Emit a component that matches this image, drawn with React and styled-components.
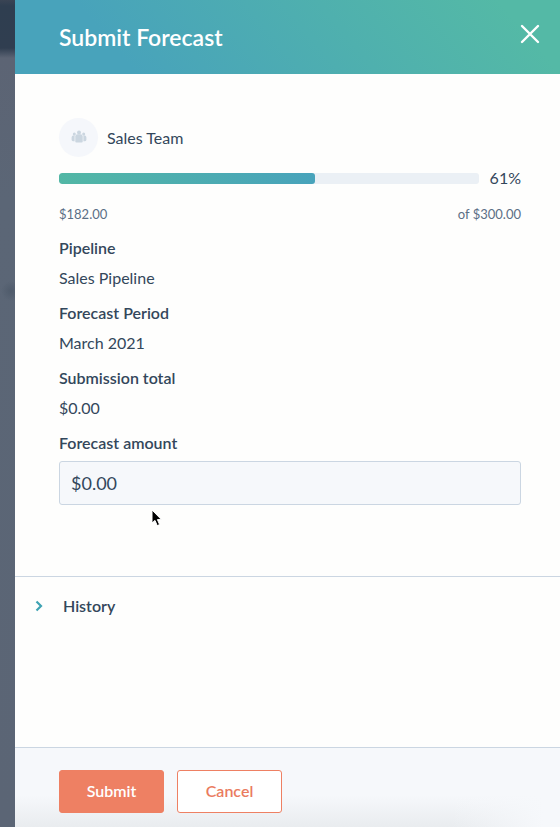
import React, { useState } from "react"
import styled, { createGlobalStyle } from "styled-components"

const GlobalStyle = createGlobalStyle`
  * {
    box-sizing: border-box;
  }
  body {
    margin: 0;
    font-family: Lato, "Open Sans", sans-serif;
    font-size: 16px;
    line-height: 24px;
    color: #33475b;
  }
`
const Backdrop = styled.div`
  display: flex;
  min-height: 100vh;
  padding-left: 15px;
  background: radial-gradient(circle at 11px 291px, #4f5b6b 0, rgba(79, 91, 107, 0) 10px),
    linear-gradient(#3a4454 0, #2f3e50 6px, #303e50 48px, #5c6474 58px, #5b6676 200px, #5b6575 100%);
`
const Panel = styled.section`
  flex: 1;
  display: flex;
  flex-direction: column;
  background: #fefefd;
`
const Header = styled.header`
  display: flex;
  align-items: center;
  justify-content: space-between;
  height: 74px;
  padding: 0 20px 0 44px;
  background: linear-gradient(50deg, #48a3bb 20%, #4fb0ae 60%, #54b9a6 90%);
  color: #fff;
`
const PageTitle = styled.h1`
  margin: 0;
  font-size: 23px;
  font-weight: 600;
`
const CloseButton = styled.button`
  display: flex;
  padding: 0 0 6px;
  border: 0;
  background: none;
  color: inherit;
  cursor: pointer;
`
const Body = styled.form`
  padding: 44px 39px 71px 44px;
`
const Team = styled.div`
  display: flex;
  align-items: center;
  gap: 9px;
`
const Avatar = styled.span`
  display: flex;
  align-items: center;
  justify-content: center;
  width: 39px;
  height: 39px;
  border-radius: 50%;
  background: #f5f7fb;
`
const Progress = styled.div`
  display: flex;
  align-items: center;
  gap: 11px;
  margin-top: 9px;
`
const Track = styled.div`
  flex: 1;
  height: 11px;
  border-radius: 3px;
  background: #ebf0f5;
  overflow: hidden;
`
const Bar = styled.div`
  height: 100%;
  border-radius: 3px;
  background: linear-gradient(to right, #52b7a5, #48a3bb);
`
const Amounts = styled.div`
  display: flex;
  justify-content: space-between;
  margin: 14px 0 12px;
  font-size: 13px;
  line-height: 20px;
  color: #5b6f86;
`
const Details = styled.dl`
  margin: 0;
`
const Term = styled.dt`
  font-weight: 600;
`
const Value = styled.dd`
  margin: 6px 0 11px;
`
const Field = styled.div`
  position: relative;
`
const Label = styled.label`
  display: block;
  margin-bottom: 6px;
  font-weight: 600;
`
const Input = styled.input`
  display: block;
  width: 100%;
  height: 44px;
  padding: 0 11px;
  border: 1px solid #cbd6e2;
  border-radius: 3px;
  background: #f6f8fb;
  color: inherit;
  font-family: inherit;
  font-size: 18px;
`
const Pointer = styled.svg`
  position: absolute;
  top: 78px;
  left: 92px;
`
const Accordion = styled.section`
  flex: 1;
  border-top: 1px solid #cbd6e2;
`
const AccordionToggle = styled.button`
  display: flex;
  align-items: center;
  gap: 20px;
  width: 100%;
  padding: 17px 20px;
  border: 0;
  background: none;
  color: inherit;
  font: inherit;
  font-weight: 600;
  cursor: pointer;
`
const Chevron = styled.svg`
  transform: ${(props) => (props.$open ? "rotate(90deg)" : "none")};
`
const Footer = styled.footer`
  display: flex;
  gap: 13px;
  padding: 22px 44px 14px;
  border-top: 1px solid #cbd6e2;
  background: linear-gradient(to right, rgba(245, 248, 250, 0) 80%, #f6f8fb 97%),
    linear-gradient(#f6f8fb 60%, #e9ecef 100%);
`
const Button = styled.button`
  min-width: 105px;
  height: 43px;
  padding: 0 26px 2px;
  border: 1px solid #ee8063;
  border-radius: 3px;
  background: ${(props) => (props.$primary ? "#ee8063" : "#fff")};
  color: ${(props) => (props.$primary ? "#fff" : "#ea7b60")};
  font: inherit;
  font-weight: 600;
  cursor: pointer;
`

const details = [
  { term: "Pipeline", value: "Sales Pipeline" },
  { term: "Forecast Period", value: "March 2021" },
  { term: "Submission total", value: "$0.00" },
]

function App() {
  const [amount, setAmount] = useState("$0.00")
  const [open, setOpen] = useState(false)
  const percent = Math.round((182 / 300) * 100)

  return (
    <>
      <GlobalStyle />
      <Backdrop>
        <Panel>
          <Header>
            <PageTitle>Submit Forecast</PageTitle>
            <CloseButton type="button" aria-label="Close">
              <svg width="20" height="20" viewBox="0 0 20 20" stroke="currentColor" strokeWidth="2.4" strokeLinecap="round">
                <path d="M2 2l16 16M18 2L2 18" />
              </svg>
            </CloseButton>
          </Header>
          <Body id="forecast" onSubmit={(e) => e.preventDefault()}>
            <Team>
              <Avatar>
                <svg width="16" height="15" viewBox="0 0 16 15" fill="#cbd6e0">
                  <circle cx="8" cy="2.6" r="2" />
                  <path d="M4.3 6.6Q4.3 4.2 6.6 4.2H9.4Q11.7 4.2 11.7 6.6V11.6Q11.7 12.6 10.7 12.6H5.3Q4.3 12.6 4.3 11.6Z" />
                  <circle cx="3.3" cy="3.9" r="1.5" />
                  <circle cx="12.7" cy="3.9" r="1.5" />
                  <path d="M3.6 5.2V11.2H2Q.6 11.2.6 9.8V7.6Q.8 5.2 3.6 5.2ZM12.4 5.2V11.2H14Q15.4 11.2 15.4 9.8V7.6Q15.2 5.2 12.4 5.2Z" />
                </svg>
              </Avatar>
              <span>Sales Team</span>
            </Team>
            <Progress>
              <Track>
                <Bar style={{ width: `${percent}%` }} />
              </Track>
              <span>{percent}%</span>
            </Progress>
            <Amounts>
              <span>$182.00</span>
              <span>of $300.00</span>
            </Amounts>
            <Details>
              {details.map(({ term, value }) => (
                <React.Fragment key={term}>
                  <Term>{term}</Term>
                  <Value>{value}</Value>
                </React.Fragment>
              ))}
            </Details>
            <Field>
              <Label htmlFor="amount">Forecast amount</Label>
              <Input id="amount" value={amount} onChange={(e) => setAmount(e.target.value)} />
              <Pointer width="12" height="19" viewBox="0 0 12 19" aria-hidden="true">
                <path
                  d="M1 1V14L4 11.4L6.2 16.6L8.6 15.6L6.4 10.6H10.4Z"
                  fill="#000"
                  stroke="#fff"
                  strokeWidth="1"
                />
              </Pointer>
            </Field>
          </Body>
          <Accordion>
            <AccordionToggle type="button" aria-expanded={open} onClick={() => setOpen(!open)}>
              <Chevron $open={open} width="8" height="12" viewBox="0 0 8 12" fill="none" stroke="#3fa3b3" strokeWidth="2.2">
                <path d="M1.5 1.5L6 6L1.5 10.5" />
              </Chevron>
              History
            </AccordionToggle>
          </Accordion>
          <Footer>
            <Button type="submit" form="forecast" $primary>
              Submit
            </Button>
            <Button type="button">Cancel</Button>
          </Footer>
        </Panel>
      </Backdrop>
    </>
  )
}

export default App
